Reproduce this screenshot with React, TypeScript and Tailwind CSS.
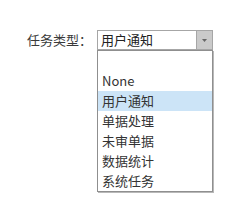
import React from "react";

const options = ["", "None", "用户通知", "单据处理", "未审单据", "数据统计", "系统任务"];

export default function App() {
  const selected = "用户通知";
  return (
    <div
      className="w-[242px] h-[212px] bg-white pt-[30px] pl-[27px]"
      style={{ fontFamily: '"Noto Sans CJK SC", "Noto Sans", sans-serif' }}
    >
      <div className="flex items-center">
        <span className="w-[70px] text-[13px] leading-[20px] text-[#3a3a3a]">任务类型：</span>
        <div className="relative">
          {/* select box */}
          <div className="flex h-[20px] w-[116px] border border-[#a6a6a6] bg-white">
            <span className="flex-1 pl-[3px] text-[13px] leading-[18px] text-[#222]">{selected}</span>
            <div className="flex w-[16px] items-center justify-center border-l border-[#a6a6a6] bg-[#cacaca]">
              <svg width="5" height="3" viewBox="0 0 5 3">
                <path d="M0 0h5L2.5 3z" fill="#666" />
              </svg>
            </div>
          </div>
          {/* dropdown list */}
          <div className="absolute left-0 top-[20px] w-[116px] border border-[#8f8f8f] bg-white shadow-[1px_1px_0_#b8b8b8]">
            {options.map((o, i) => (
              <div
                key={i}
                className={`h-[20px] pl-[4px] text-[13px] leading-[20px] text-[#333] ${
                  o === selected ? "bg-[#cce4f7]" : ""
                }`}
              >
                {o}
              </div>
            ))}
          </div>
        </div>
      </div>
    </div>
  );
}
